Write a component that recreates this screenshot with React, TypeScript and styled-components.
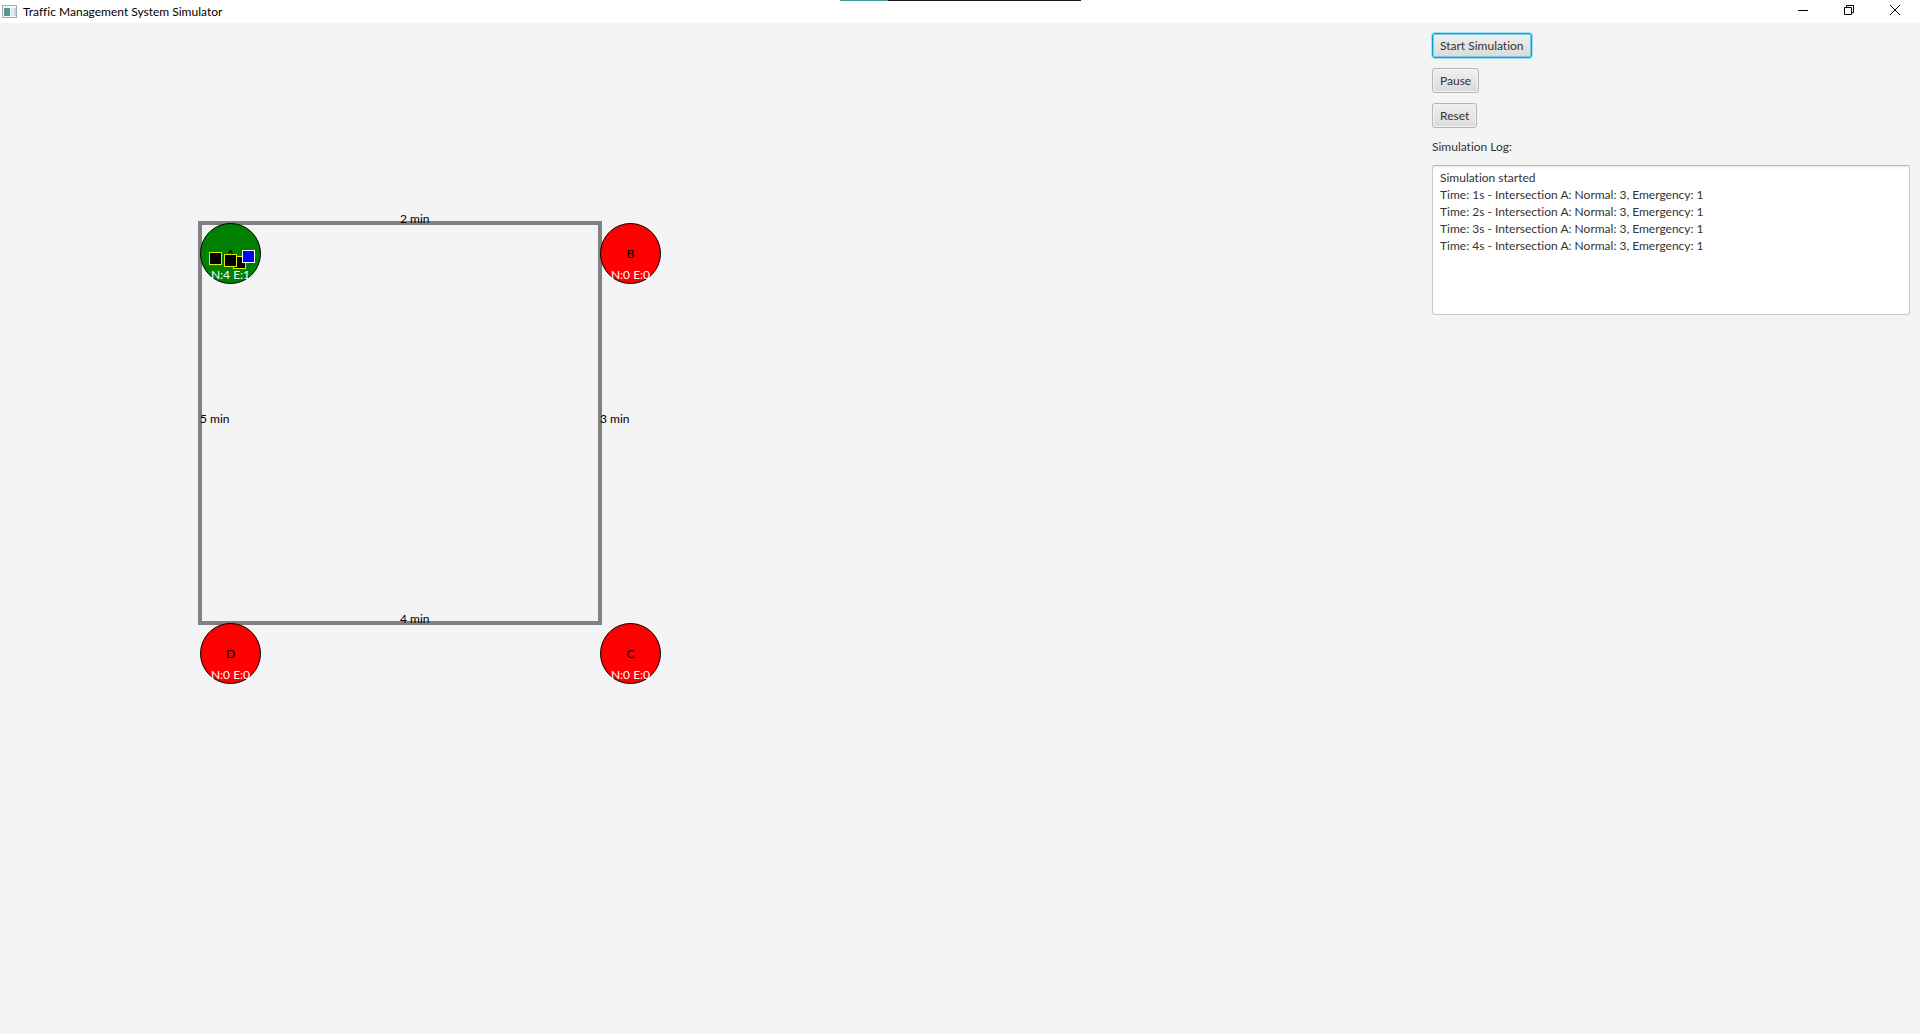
import React from "react";
import styled, { createGlobalStyle } from "styled-components";

const GlobalStyle = createGlobalStyle`
  *, *::before, *::after { box-sizing: border-box; }
  body {
    margin: 0;
    background: #f4f4f4;
    color: #333;
    font-family: Lato, "Open Sans", sans-serif;
    font-size: 12px;
    font-variant-ligatures: none;
    line-height: 17px;
  }
  button, textarea { font: inherit; font-variant-ligatures: none; color: inherit; }
`;

const Window = styled.div`
  display: flex;
  flex-direction: column;
  min-height: 100vh;
`;

const TitleBar = styled.header`
  position: relative;
  display: flex;
  align-items: center;
  height: 23px;
  padding: 0 2px;
  gap: 5px;
  background: #fff;
  color: #000;
`;

const Title = styled.h1`
  flex: 1;
  margin: 0;
  font-size: 12px;
  font-weight: 400;
`;

const ScreenStrip = styled.div`
  position: absolute;
  top: 0;
  left: 840px;
  width: 241px;
  height: 1px;
  background: linear-gradient(to right, #3d9c9c 48px, #1c1c20 48px);
`;

const CaptionButtons = styled.div`
  display: flex;
  height: 100%;
`;

const CaptionButton = styled.button`
  display: flex;
  align-items: center;
  justify-content: center;
  width: 46px;
  padding: 0 0 3px;
  border: 0;
  background: none;
`;

const Content = styled.main`
  display: flex;
  flex: 1;
`;

const Canvas = styled.section`
  position: relative;
  flex: 1;
  color: #000;
`;

const RoadLoop = styled.div`
  position: absolute;
  left: 198px;
  top: 198px;
  width: 404px;
  height: 404px;
  border: 4px solid #808080;
`;

const RoadLabel = styled.span<{ $x: number; $y: number }>`
  position: absolute;
  left: ${(p) => p.$x}px;
  top: ${(p) => p.$y - 13}px;
  white-space: nowrap;
`;

const Node = styled.div<{ $x: number; $y: number; $open?: boolean }>`
  position: absolute;
  left: ${(p) => p.$x}px;
  top: ${(p) => p.$y}px;
  display: flex;
  flex-direction: column;
  align-items: center;
  gap: 4px;
  width: 61px;
  height: 61px;
  padding-top: 21px;
  border: 1px solid #000;
  border-radius: 50%;
  background: ${(p) => (p.$open ? "#008000" : "#f00")};
`;

const QueueCount = styled.span`
  color: #fff;
  white-space: nowrap;
`;

const Vehicle = styled.div<{ $x: number; $y: number; $emergency?: boolean }>`
  position: absolute;
  left: ${(p) => p.$x}px;
  top: ${(p) => p.$y}px;
  width: 13px;
  height: 13px;
  border: 1px solid ${(p) => (p.$emergency ? "#fff" : "#e6e600")};
  background: ${(p) => (p.$emergency ? "#00f" : "#000")};
`;

const Panel = styled.aside`
  display: flex;
  flex-direction: column;
  align-items: flex-start;
  gap: 10px;
  width: 498px;
  padding: 10px;
`;

const Button = styled.button<{ $active?: boolean }>`
  height: 25px;
  padding: 0 7px;
  border: 1px solid ${(p) => (p.$active ? "#039ed3" : "#b5b5b5")};
  border-radius: 3px;
  background: linear-gradient(#f0f0f0, #dadada);
  box-shadow: ${(p) =>
    p.$active ? "0 0 0 1px #a5e0f5, inset 0 0 0 1px #7fcfea" : "inset 0 0 0 1px #f3f3f3"};
`;

const Log = styled.textarea`
  display: block;
  width: 100%;
  height: 150px;
  padding: 3px 7px;
  border: 1px solid #c8c8c8;
  border-top-color: #b5b5b5;
  border-radius: 3px;
  outline: 0;
  resize: none;
  background: linear-gradient(#f2f2f2, #fff 4px);
`;

const intersections = [
  { name: "A", x: 200, y: 200, normal: 4, emergency: 1, open: true },
  { name: "B", x: 600, y: 200, normal: 0, emergency: 0 },
  { name: "C", x: 600, y: 600, normal: 0, emergency: 0 },
  { name: "D", x: 200, y: 600, normal: 0, emergency: 0 },
];

const roads = [
  { minutes: 2, x: 400, y: 200 },
  { minutes: 3, x: 600, y: 400 },
  { minutes: 4, x: 400, y: 600 },
  { minutes: 5, x: 200, y: 400 },
];

const vehicles = [
  { x: 209, y: 229 },
  { x: 233, y: 233 },
  { x: 224, y: 231 },
  { x: 242, y: 227, emergency: true },
];

const log = [
  "Simulation started",
  ...[1, 2, 3, 4].map((s) => `Time: ${s}s - Intersection A: Normal: 3, Emergency: 1`),
].join("\n");

const AppIcon = () => (
  <svg width="16" height="14" viewBox="0 0 16 14" aria-hidden="true">
    <rect x="0.5" y="0.5" width="14" height="12" fill="#f4f6f8" stroke="#a3abb3" />
    <rect x="2" y="3" width="6" height="8" fill="#4f9a94" />
    <rect x="9" y="3" width="2" height="8" fill="#dfe8ea" />
    <rect x="12" y="3" width="2" height="8" fill="#c9d3d8" />
  </svg>
);

export default function App() {
  return (
    <Window>
      <GlobalStyle />
      <TitleBar>
        <AppIcon />
        <Title>Traffic Management System Simulator</Title>
        <ScreenStrip />
        <CaptionButtons>
          <CaptionButton aria-label="Minimize">
            <svg width="10" height="10" stroke="#000" fill="none">
              <path d="M0 5.5h10" />
            </svg>
          </CaptionButton>
          <CaptionButton aria-label="Restore">
            <svg width="10" height="10" stroke="#000" fill="none">
              <path d="M0.5 2.5h7v7h-7zM2.5 2.5v-2h7v7h-2" />
            </svg>
          </CaptionButton>
          <CaptionButton aria-label="Close">
            <svg width="10" height="10" stroke="#000" fill="none">
              <path d="M0 0l10 10M10 0L0 10" />
            </svg>
          </CaptionButton>
        </CaptionButtons>
      </TitleBar>
      <Content>
        <Canvas aria-label="Road network">
          <RoadLoop />
          {roads.map((r) => (
            <RoadLabel key={r.minutes} $x={r.x} $y={r.y}>
              {r.minutes} min
            </RoadLabel>
          ))}
          {intersections.map((n) => (
            <Node key={n.name} $x={n.x} $y={n.y} $open={n.open}>
              <span>{n.name}</span>
              <QueueCount>{`N:${n.normal} E:${n.emergency}`}</QueueCount>
            </Node>
          ))}
          {vehicles.map((v) => (
            <Vehicle key={v.x} $x={v.x} $y={v.y} $emergency={v.emergency} />
          ))}
        </Canvas>
        <Panel>
          <Button $active>Start Simulation</Button>
          <Button>Pause</Button>
          <Button>Reset</Button>
          <label htmlFor="log">Simulation Log:</label>
          <Log id="log" readOnly value={log} />
        </Panel>
      </Content>
    </Window>
  );
}
